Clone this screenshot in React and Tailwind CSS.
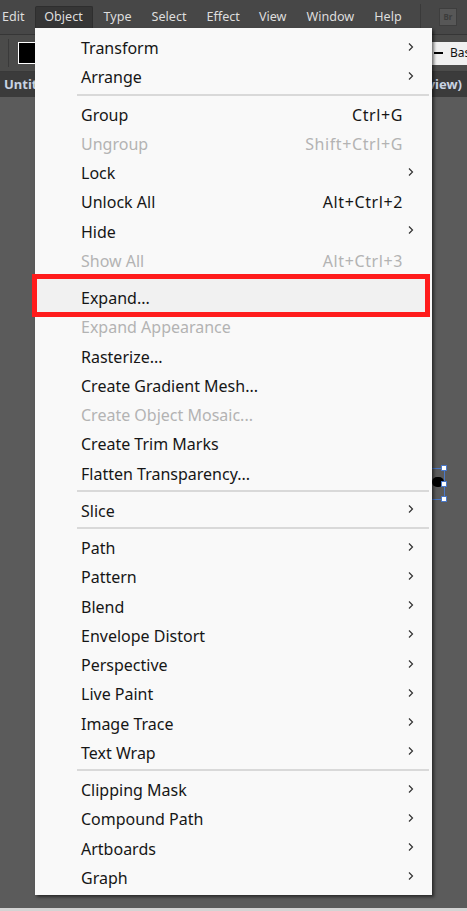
import React from "react";

const font = { fontFamily: '"Noto Sans", "Liberation Sans", sans-serif' };

const groups = [
  [
    { t: "Transform", sub: true },
    { t: "Arrange", sub: true },
  ],
  [
    { t: "Group", k: "Ctrl+G" },
    { t: "Ungroup", k: "Shift+Ctrl+G", dis: true },
    { t: "Lock", sub: true },
    { t: "Unlock All", k: "Alt+Ctrl+2" },
    { t: "Hide", sub: true },
    { t: "Show All", k: "Alt+Ctrl+3", dis: true },
  ],
  [
    { t: "Expand...", hl: true },
    { t: "Expand Appearance", dis: true },
    { t: "Rasterize..." },
    { t: "Create Gradient Mesh..." },
    { t: "Create Object Mosaic...", dis: true },
    { t: "Create Trim Marks" },
    { t: "Flatten Transparency..." },
  ],
  [{ t: "Slice", sub: true }],
  [
    { t: "Path", sub: true },
    { t: "Pattern", sub: true },
    { t: "Blend", sub: true },
    { t: "Envelope Distort", sub: true },
    { t: "Perspective", sub: true },
    { t: "Live Paint", sub: true },
    { t: "Image Trace", sub: true },
    { t: "Text Wrap", sub: true },
  ],
  [
    { t: "Clipping Mask", sub: true },
    { t: "Compound Path", sub: true },
    { t: "Artboards", sub: true },
    { t: "Graph", sub: true },
  ],
];

function Chevron() {
  return (
    <svg width="6" height="9" viewBox="0 0 6 9" className="absolute right-[18px] top-1/2 -translate-y-1/2">
      <path d="M1 1 L4.5 4.5 L1 8" fill="none" stroke="#333" strokeWidth="1.2" />
    </svg>
  );
}

function Item({ it }) {
  return (
    <div
      className={
        "relative flex items-center h-[29.25px] pt-[3px] pl-[46px] pr-[29px] text-[16px] " +
        (it.dis ? "text-[#b3b3b3]" : "text-[#161616]")
      }
    >
      {it.hl && (
        <div className="absolute left-[-3px] right-[2px] top-[-8px] bottom-[-6px] border-[5px] border-[#ff1c1c] bg-[#f1f1f1]" />
      )}
      <span className="relative flex-1 leading-none">{it.t}</span>
      {it.k && <span className="relative leading-none tracking-[0.6px]">{it.k}</span>}
      {it.sub && <Chevron />}
    </div>
  );
}

function Sep() {
  return (
    <div className="h-[8px] flex items-center pl-[42px] pr-[3px]">
      <div className="h-[2px] w-full bg-[#d9d9d9]" />
    </div>
  );
}

export default function App() {
  return (
    <div className="relative w-[467px] h-[911px] overflow-hidden flex flex-col bg-[#5b5b5b]" style={font}>
      {/* menu bar */}
      <div className="h-[35px] bg-[#474747] border-b border-[#363636] flex items-center text-[12.6px] text-[#dedede] relative">
        <span className="ml-[2px]">Edit</span>
        <div className="ml-[10px] self-end h-[28px] w-[58px] rounded-t-[2px] bg-[#363636] border border-[#2e2e2e] border-b-0 flex items-start justify-center pt-[1px]">
          <span>Object</span>
        </div>
        <span className="ml-[11px]">Type</span>
        <span className="ml-[20px]">Select</span>
        <span className="ml-[20px]">Effect</span>
        <span className="ml-[19px]">View</span>
        <span className="ml-[20px]">Window</span>
        <span className="ml-[20px]">Help</span>
        <div className="ml-auto w-px h-[26px] bg-[#3a3a3a]" />
        <div className="ml-[18px] mr-[10px] w-[18px] h-[18px] bg-[#575757] border border-[#3e3e3e] flex items-center justify-center text-[8px] font-bold text-[#3c3c3c]">
          Br
        </div>
      </div>
      {/* control bar */}
      <div className="h-[37px] bg-[#4b4b4a] border-b border-[#393939] flex items-center relative">
        <div className="ml-[8px] w-px h-[28px] bg-[#3a3a3a]" />
        <div className="ml-[9px] w-[18px] h-[22px] bg-black border border-white" />
        <div className="ml-auto w-[35px] h-[23px] bg-[#f0f0f0] flex items-center overflow-hidden">
          <div className="ml-[2px] w-[9px] h-[2px] shrink-0 bg-black" />
          <span className="ml-[7px] text-[12px] text-[#111] whitespace-nowrap">Bas</span>
        </div>
      </div>
      {/* doc tab bar */}
      <div className="h-[25px] bg-[#3b3b3b] flex items-center justify-between text-[13px] font-bold text-[#c9d3e3]">
        <span className="ml-[4px]">Untitled-1</span>
        <span className="mr-[5px]">Preview)</span>
      </div>
      {/* canvas */}
      <div className="flex-1 relative">
        <div className="absolute left-[432px] top-[380px] w-[12px] h-[10px] rounded-full bg-black" />
        <div className="absolute left-[430px] top-[371px] w-[15px] h-px bg-[#4a78c8]" />
        <div className="absolute left-[430px] top-[402px] w-[15px] h-px bg-[#4a78c8]" />
        <div className="absolute left-[444px] top-[371px] w-px h-[31px] bg-[#4a78c8]" />
        <div className="absolute left-[441px] top-[368px] w-[6px] h-[6px] bg-white border border-[#4a78c8]" />
        <div className="absolute left-[441px] top-[384px] w-[6px] h-[6px] bg-white border border-[#4a78c8]" />
        <div className="absolute left-[441px] top-[399px] w-[6px] h-[6px] bg-white border border-[#4a78c8]" />
      </div>
      <div className="h-[3px] bg-[#d4d4d4]" />

      {/* dropdown menu */}
      <div className="absolute left-[35px] top-[28px] w-[397px] bg-[#f9f9f9] pt-[4px] pb-[4px] shadow-[2px_2px_3px_rgba(0,0,0,0.55)]">
        {groups.map((g, gi) => (
          <React.Fragment key={gi}>
            {gi > 0 && <Sep />}
            {g.map((it) => (
              <Item key={it.t} it={it} />
            ))}
          </React.Fragment>
        ))}
      </div>
    </div>
  );
}
